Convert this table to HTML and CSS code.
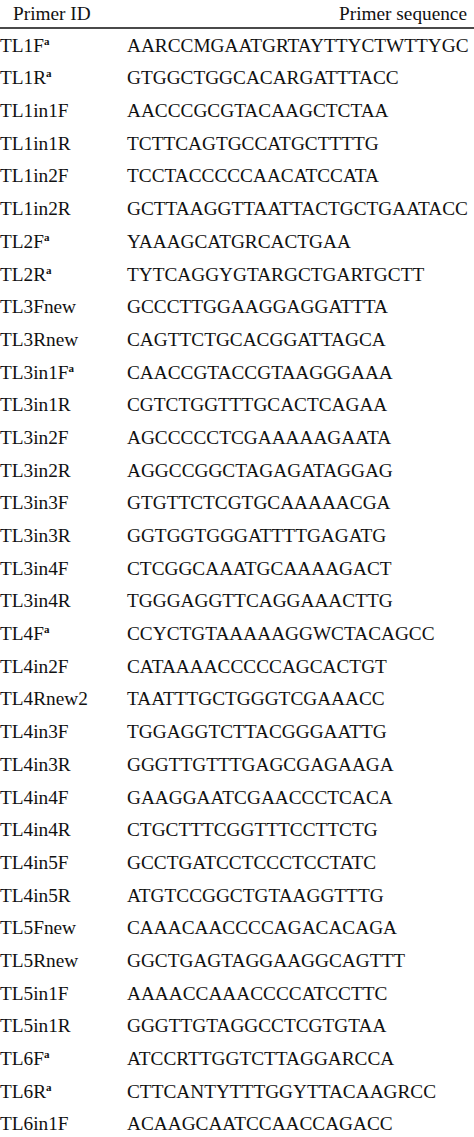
FILE: index.html
```html
<!DOCTYPE html>
<html>
<head>
<meta charset="utf-8">
<link rel="stylesheet" href="styles.css">
</head>
<body>
<div class="table">
  <div class="head">
    <div class="h-id">Primer ID</div>
    <div class="h-seq">Primer sequence</div>
  </div>
  <div class="row"><div class="id">TL1F<sup>a</sup></div><div class="seq">AARCCMGAATGRTAYTTYCTWTTYGC</div></div>
  <div class="row"><div class="id">TL1R<sup>a</sup></div><div class="seq">GTGGCTGGCACARGATTTACC</div></div>
  <div class="row"><div class="id">TL1in1F</div><div class="seq">AACCCGCGTACAAGCTCTAA</div></div>
  <div class="row"><div class="id">TL1in1R</div><div class="seq">TCTTCAGTGCCATGCTTTTG</div></div>
  <div class="row"><div class="id">TL1in2F</div><div class="seq">TCCTACCCCCAACATCCATA</div></div>
  <div class="row"><div class="id">TL1in2R</div><div class="seq">GCTTAAGGTTAATTACTGCTGAATACC</div></div>
  <div class="row"><div class="id">TL2F<sup>a</sup></div><div class="seq">YAAAGCATGRCACTGAA</div></div>
  <div class="row"><div class="id">TL2R<sup>a</sup></div><div class="seq">TYTCAGGYGTARGCTGARTGCTT</div></div>
  <div class="row"><div class="id">TL3Fnew</div><div class="seq">GCCCTTGGAAGGAGGATTTA</div></div>
  <div class="row"><div class="id">TL3Rnew</div><div class="seq">CAGTTCTGCACGGATTAGCA</div></div>
  <div class="row"><div class="id">TL3in1F<sup>a</sup></div><div class="seq">CAACCGTACCGTAAGGGAAA</div></div>
  <div class="row"><div class="id">TL3in1R</div><div class="seq">CGTCTGGTTTGCACTCAGAA</div></div>
  <div class="row"><div class="id">TL3in2F</div><div class="seq">AGCCCCCTCGAAAAAGAATA</div></div>
  <div class="row"><div class="id">TL3in2R</div><div class="seq">AGGCCGGCTAGAGATAGGAG</div></div>
  <div class="row"><div class="id">TL3in3F</div><div class="seq">GTGTTCTCGTGCAAAAACGA</div></div>
  <div class="row"><div class="id">TL3in3R</div><div class="seq">GGTGGTGGGATTTTGAGATG</div></div>
  <div class="row"><div class="id">TL3in4F</div><div class="seq">CTCGGCAAATGCAAAAGACT</div></div>
  <div class="row"><div class="id">TL3in4R</div><div class="seq">TGGGAGGTTCAGGAAACTTG</div></div>
  <div class="row"><div class="id">TL4F<sup>a</sup></div><div class="seq">CCYCTGTAAAAAGGWCTACAGCC</div></div>
  <div class="row"><div class="id">TL4in2F</div><div class="seq">CATAAAACCCCCAGCACTGT</div></div>
  <div class="row"><div class="id">TL4Rnew2</div><div class="seq">TAATTTGCTGGGTCGAAACC</div></div>
  <div class="row"><div class="id">TL4in3F</div><div class="seq">TGGAGGTCTTACGGGAATTG</div></div>
  <div class="row"><div class="id">TL4in3R</div><div class="seq">GGGTTGTTTGAGCGAGAAGA</div></div>
  <div class="row"><div class="id">TL4in4F</div><div class="seq">GAAGGAATCGAACCCTCACA</div></div>
  <div class="row"><div class="id">TL4in4R</div><div class="seq">CTGCTTTCGGTTTCCTTCTG</div></div>
  <div class="row"><div class="id">TL4in5F</div><div class="seq">GCCTGATCCTCCCTCCTATC</div></div>
  <div class="row"><div class="id">TL4in5R</div><div class="seq">ATGTCCGGCTGTAAGGTTTG</div></div>
  <div class="row"><div class="id">TL5Fnew</div><div class="seq">CAAACAACCCCAGACACAGA</div></div>
  <div class="row"><div class="id">TL5Rnew</div><div class="seq">GGCTGAGTAGGAAGGCAGTTT</div></div>
  <div class="row"><div class="id">TL5in1F</div><div class="seq">AAAACCAAACCCCATCCTTC</div></div>
  <div class="row"><div class="id">TL5in1R</div><div class="seq">GGGTTGTAGGCCTCGTGTAA</div></div>
  <div class="row"><div class="id">TL6F<sup>a</sup></div><div class="seq">ATCCRTTGGTCTTAGGARCCA</div></div>
  <div class="row"><div class="id">TL6R<sup>a</sup></div><div class="seq">CTTCANTYTTTGGYTTACAAGRCC</div></div>
  <div class="row"><div class="id">TL6in1F</div><div class="seq">ACAAGCAATCCAACCAGACC</div></div>
</div>
</body>
</html>
```

FILE: styles.css
```css
html, body {
  margin: 0;
  padding: 0;
  background: #ffffff;
}
body {
  font-family: "Liberation Serif", "Times New Roman", serif;
  font-size: 19.3px;
  color: #111111;
  width: 474px;
  overflow: hidden;
}
.table {
  display: flex;
  flex-direction: column;
}
.head {
  display: flex;
  justify-content: space-between;
  align-items: center;
  height: 27px;
  border-bottom: 2px solid #4a4a4a;
  padding: 0 7px 0 13px;
}
.row {
  display: grid;
  grid-template-columns: 127px 1fr;
  align-items: center;
  height: 32.7px;
}
.id, .seq {
  white-space: nowrap;
  line-height: 1;
}
sup {
  font-size: 11px;
  font-weight: bold;
  vertical-align: 7px;
  line-height: 0;
}
```
